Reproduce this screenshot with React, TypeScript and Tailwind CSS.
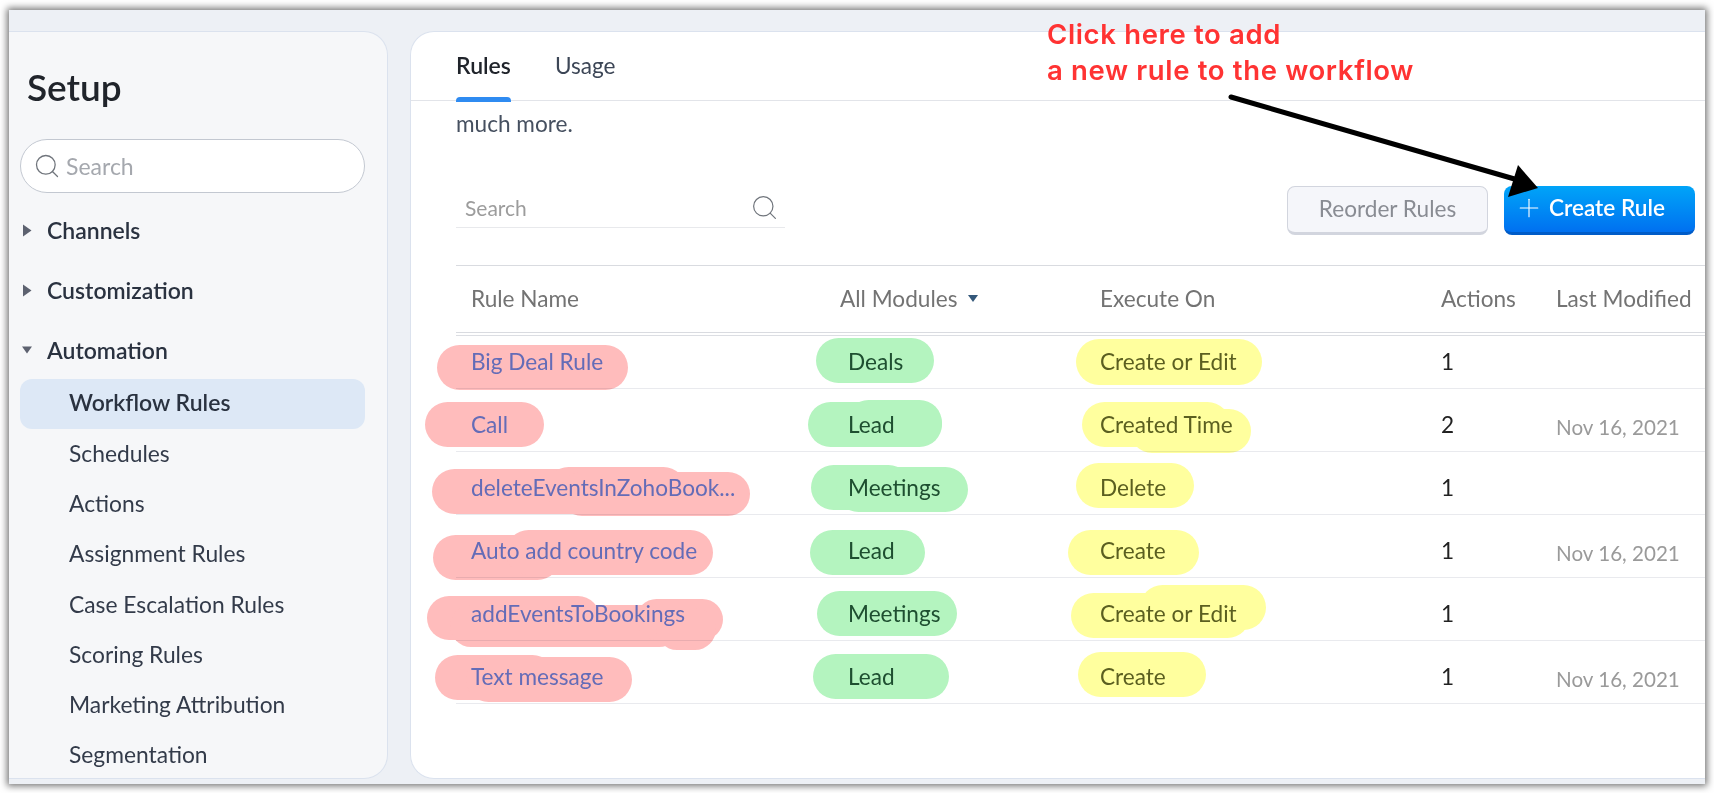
import { Plus, Search } from "lucide-react";

type RuleRow = {
  name: string;
  module: string;
  executeOn: string;
  actions: number;
  modified?: string;
  height: string;
  marks: { color: string; pills: string[] }[];
};

const PINK = "bg-[#ffbcbc]";
const GREEN = "bg-[#b4f4bf]";
const YELLOW = "bg-[#ffff9e]";

// marker strokes, offsets are from the row's top left corner
const rows: RuleRow[] = [
  {
    name: "Big Deal Rule",
    module: "Deals",
    executeOn: "Create or Edit",
    actions: 1,
    height: "h-[53px]",
    marks: [
      { color: PINK, pills: ["left-[-19px] top-[9px] w-[191px] h-[45px]"] },
      { color: GREEN, pills: ["left-[360px] top-[2px] w-[118px] h-[45px]"] },
      { color: YELLOW, pills: ["left-[620px] top-[3px] w-[186px] h-[46px]"] },
    ],
  },
  {
    name: "Call",
    module: "Lead",
    executeOn: "Created Time",
    actions: 2,
    modified: "Nov 16, 2021",
    height: "h-[63px]",
    marks: [
      { color: PINK, pills: ["left-[-31px] top-[13px] w-[119px] h-[45px]"] },
      {
        color: GREEN,
        pills: [
          "left-[352px] top-[13px] w-[134px] h-[45px]",
          "left-[390px] top-[11px] w-[96px] h-[45px]",
        ],
      },
      {
        color: YELLOW,
        pills: [
          "left-[626px] top-[13px] w-[148px] h-[45px]",
          "left-[674px] top-[20px] w-[121px] h-[44px]",
        ],
      },
    ],
  },
  {
    name: "deleteEventsInZohoBook...",
    module: "Meetings",
    executeOn: "Delete",
    actions: 1,
    height: "h-[63px]",
    marks: [
      {
        color: PINK,
        pills: [
          "left-[-24px] top-[17px] w-[228px] h-[45px]",
          "left-[90px] top-[15px] w-[140px] h-[45px]",
          "left-[104px] top-[20px] w-[190px] h-[44px]",
        ],
      },
      {
        color: GREEN,
        pills: [
          "left-[355px] top-[13px] w-[100px] h-[45px]",
          "left-[380px] top-[15px] w-[132px] h-[45px]",
        ],
      },
      { color: YELLOW, pills: ["left-[620px] top-[11px] w-[118px] h-[45px]"] },
    ],
  },
  {
    name: "Auto add country code",
    module: "Lead",
    executeOn: "Create",
    actions: 1,
    modified: "Nov 16, 2021",
    height: "h-[63px]",
    marks: [
      {
        color: PINK,
        pills: [
          "left-[-23px] top-[20px] w-[127px] h-[45px]",
          "left-[50px] top-[15px] w-[207px] h-[45px]",
        ],
      },
      { color: GREEN, pills: ["left-[354px] top-[15px] w-[115px] h-[45px]"] },
      { color: YELLOW, pills: ["left-[612px] top-[15px] w-[131px] h-[45px]"] },
    ],
  },
  {
    name: "addEventsToBookings",
    module: "Meetings",
    executeOn: "Create or Edit",
    actions: 1,
    height: "h-[63px]",
    marks: [
      {
        color: PINK,
        pills: [
          "left-[-29px] top-[18px] w-[173px] h-[44px]",
          "left-[-6px] top-[27px] w-[230px] h-[42px]",
          "left-[180px] top-[21px] w-[87px] h-[41px]",
          "left-[200px] top-[30px] w-[60px] h-[42px]",
        ],
      },
      { color: GREEN, pills: ["left-[361px] top-[13px] w-[140px] h-[45px]"] },
      {
        color: YELLOW,
        pills: [
          "left-[615px] top-[15px] w-[179px] h-[45px]",
          "left-[684px] top-[7px] w-[126px] h-[45px]",
        ],
      },
    ],
  },
  {
    name: "Text message",
    module: "Lead",
    executeOn: "Create",
    actions: 1,
    modified: "Nov 16, 2021",
    height: "h-[63px]",
    marks: [
      {
        color: PINK,
        pills: [
          "left-[-21px] top-[14px] w-[120px] h-[45px]",
          "left-[10px] top-[16px] w-[166px] h-[45px]",
        ],
      },
      { color: GREEN, pills: ["left-[357px] top-[13px] w-[136px] h-[45px]"] },
      { color: YELLOW, pills: ["left-[622px] top-[11px] w-[128px] h-[45px]"] },
    ],
  },
];

const subItems = [
  "Schedules",
  "Actions",
  "Assignment Rules",
  "Case Escalation Rules",
  "Scoring Rules",
  "Marketing Attribution",
  "Segmentation",
];

function Triangle({ down }: { down?: boolean }) {
  return (
    <svg width="10" height="13" viewBox="0 0 10 13" className="shrink-0 text-[#5d6270]">
      {down ? (
        <path d="M0 2.5h10L5 9.5z" fill="currentColor" />
      ) : (
        <path d="M1 .5l8.5 6-8.5 6z" fill="currentColor" />
      )}
    </svg>
  );
}

function Group({ label, down, mt }: { label: string; down?: boolean; mt: string }) {
  return (
    <div className={`flex h-[26px] items-center gap-[15px] pl-[13px] ${mt}`}>
      <Triangle down={down} />
      <span className="text-[23px] font-semibold text-[#2a3240]">{label}</span>
    </div>
  );
}

function Sidebar() {
  return (
    <aside className="h-full w-[379px] shrink-0 overflow-hidden rounded-r-[24px] border border-l-0 border-[#dbe2ee] bg-[#f6f7f9]">
      <h1 className="mt-[31px] ml-[18px] text-[37px] leading-[48px] font-semibold text-[#20242b]">Setup</h1>
      <div className="mt-[28px] ml-[11px] flex h-[54px] w-[345px] items-center gap-[5px] rounded-full border border-[#c3c8d1] bg-white pl-[12px]">
        <Search size={28} strokeWidth={1.1} className="text-[#70757c]" />
        <span className="text-[23px] text-[#a5a8ae]">Search</span>
      </div>
      <Group label="Channels" mt="mt-[24px]" />
      <Group label="Customization" mt="mt-[34px]" />
      <Group label="Automation" down mt="mt-[34px]" />
      <div className="mt-[16px] ml-[11px] flex h-[50px] w-[345px] items-center rounded-[12px] bg-[#dde8f6] pb-[3px] pl-[49px] text-[23px] font-semibold text-[#2a3240]">
        Workflow Rules
      </div>
      <div className="-mt-[1px]">
        {subItems.map((item) => (
          <div key={item} className="flex h-[50.2px] items-center pl-[60px] text-[22.8px] text-[#333b4a]">
            {item}
          </div>
        ))}
      </div>
    </aside>
  );
}

const COLUMNS = "grid grid-cols-[369px_260px_341px_116px_1fr] pl-[15px]";

function RuleTable() {
  return (
    <div className="mt-[30px] ml-[45px]">
      <div className="border-t border-b border-[#d9dbe0]">
        <div className={`${COLUMNS} h-[66px] items-center text-[22.6px] text-[#737373]`}>
          <span>Rule Name</span>
          <span className="flex items-center gap-[11px]">
            All Modules
            <svg width="10" height="7" viewBox="0 0 10 7">
              <path d="M0 0h10L5 7z" fill="#34587a" />
            </svg>
          </span>
          <span>Execute On</span>
          <span>Actions</span>
          <span className="-translate-x-[1px]">Last Modified</span>
        </div>
      </div>
      <div className="mt-[2px] border-t border-[#dcdee3]">
        {rows.map((row) => (
          <div key={row.name} className={`relative border-b border-[#e9eaee] ${row.height}`}>
            <div className={`${COLUMNS} h-full items-end pb-[12px] text-[22.6px] leading-[28px]`}>
              <span className="text-[#6492f8]">{row.name}</span>
              <span className="pl-[8px] text-[#2a5240]">{row.module}</span>
              <span className="text-[#5b5f33]">{row.executeOn}</span>
              <span className="text-[#222222]">{row.actions}</span>
              <span className="-translate-x-[1px] translate-y-[2px] text-[20.6px] text-[#9a9a9a]">{row.modified}</span>
            </div>
            {row.marks.map((mark, index) => (
              <div key={index} className="absolute inset-0 mix-blend-multiply">
                {mark.pills.map((pill) => (
                  <div key={pill} className={`absolute rounded-full ${mark.color} ${pill}`} />
                ))}
              </div>
            ))}
          </div>
        ))}
      </div>
    </div>
  );
}

function MainPanel() {
  return (
    <main className="h-full min-w-0 flex-1 overflow-hidden rounded-l-[24px] border border-r-0 border-[#dbe2ee] bg-white">
      <div className="flex h-[69px] items-start gap-[44px] border-b border-[#e2e4e9] pl-[45px]">
        <div className="relative h-[69px] pt-[17px]">
          <span className="text-[23px] leading-[32px] font-semibold text-[#20242b]">Rules</span>
          <div className="absolute right-0 bottom-[-1px] left-0 h-[5px] rounded-t-[4px] bg-[#2f8bf1]" />
        </div>
        <span className="pt-[18px] text-[22.6px] leading-[32px] text-[#3c4656]">Usage</span>
      </div>
      <p className="mt-[9px] ml-[45px] text-[22.6px] leading-[28px] text-[#465060]">much more.</p>
      <div className="mt-[48px] flex items-start justify-between pr-[10px] pl-[45px]">
        <div className="mt-[2px] flex h-[40px] w-[329px] items-center justify-between border-b border-[#e8e9ec] pr-[6px] pl-[9px]">
          <span className="text-[21px] text-[#9c9c9c]">Search</span>
          <Search size={29} strokeWidth={1} className="text-[#70757c]" />
        </div>
        <div className="flex gap-[16px]">
          <button
            type="button"
            className="h-[49px] w-[201px] rounded-[8px] border border-b-[3px] border-[#d2d5de] bg-[#f5f6fa] pb-[2px] text-[22.6px] text-[#898c93]"
          >
            Reorder Rules
          </button>
          <button
            type="button"
            className="flex h-[49px] w-[191px] items-center gap-[5px] rounded-[8px] border-b-[3px] border-[#005cc8] bg-gradient-to-b from-[#00a4f8] to-[#0070f0] pb-[2px] pl-[10px] text-[22.6px] font-semibold text-white"
          >
            <Plus size={30} strokeWidth={0.9} />
            Create Rule
          </button>
        </div>
      </div>
      <RuleTable />
    </main>
  );
}

export default function App() {
  return (
    <div className="relative h-[793px] w-[1714px] overflow-hidden bg-white pt-[10px] pl-[9px] font-['Lato',sans-serif]">
      <div className="flex h-[774px] w-[1696px] gap-[22px] bg-[#edf0f5] pt-[21px] pb-[5px] shadow-[0_0_7px_2px_rgba(0,0,0,0.55)]">
        <Sidebar />
        <MainPanel />
      </div>

      <div className="absolute top-[16px] left-[1047px] font-['Inter',sans-serif] text-[27.5px] leading-[36px] font-semibold tracking-[0.65px] text-[#ff3333]">
        <p>Click here to add</p>
        <p>a new rule to the workflow</p>
      </div>
      <svg className="absolute top-0 left-0" width="1714" height="793" viewBox="0 0 1714 793" fill="none">
        <path d="M1231 97L1518 180" stroke="#000" strokeWidth="5" strokeLinecap="round" />
        <path d="M1518 165L1538 188L1508 197Z" fill="#000" />
      </svg>
    </div>
  );
}
